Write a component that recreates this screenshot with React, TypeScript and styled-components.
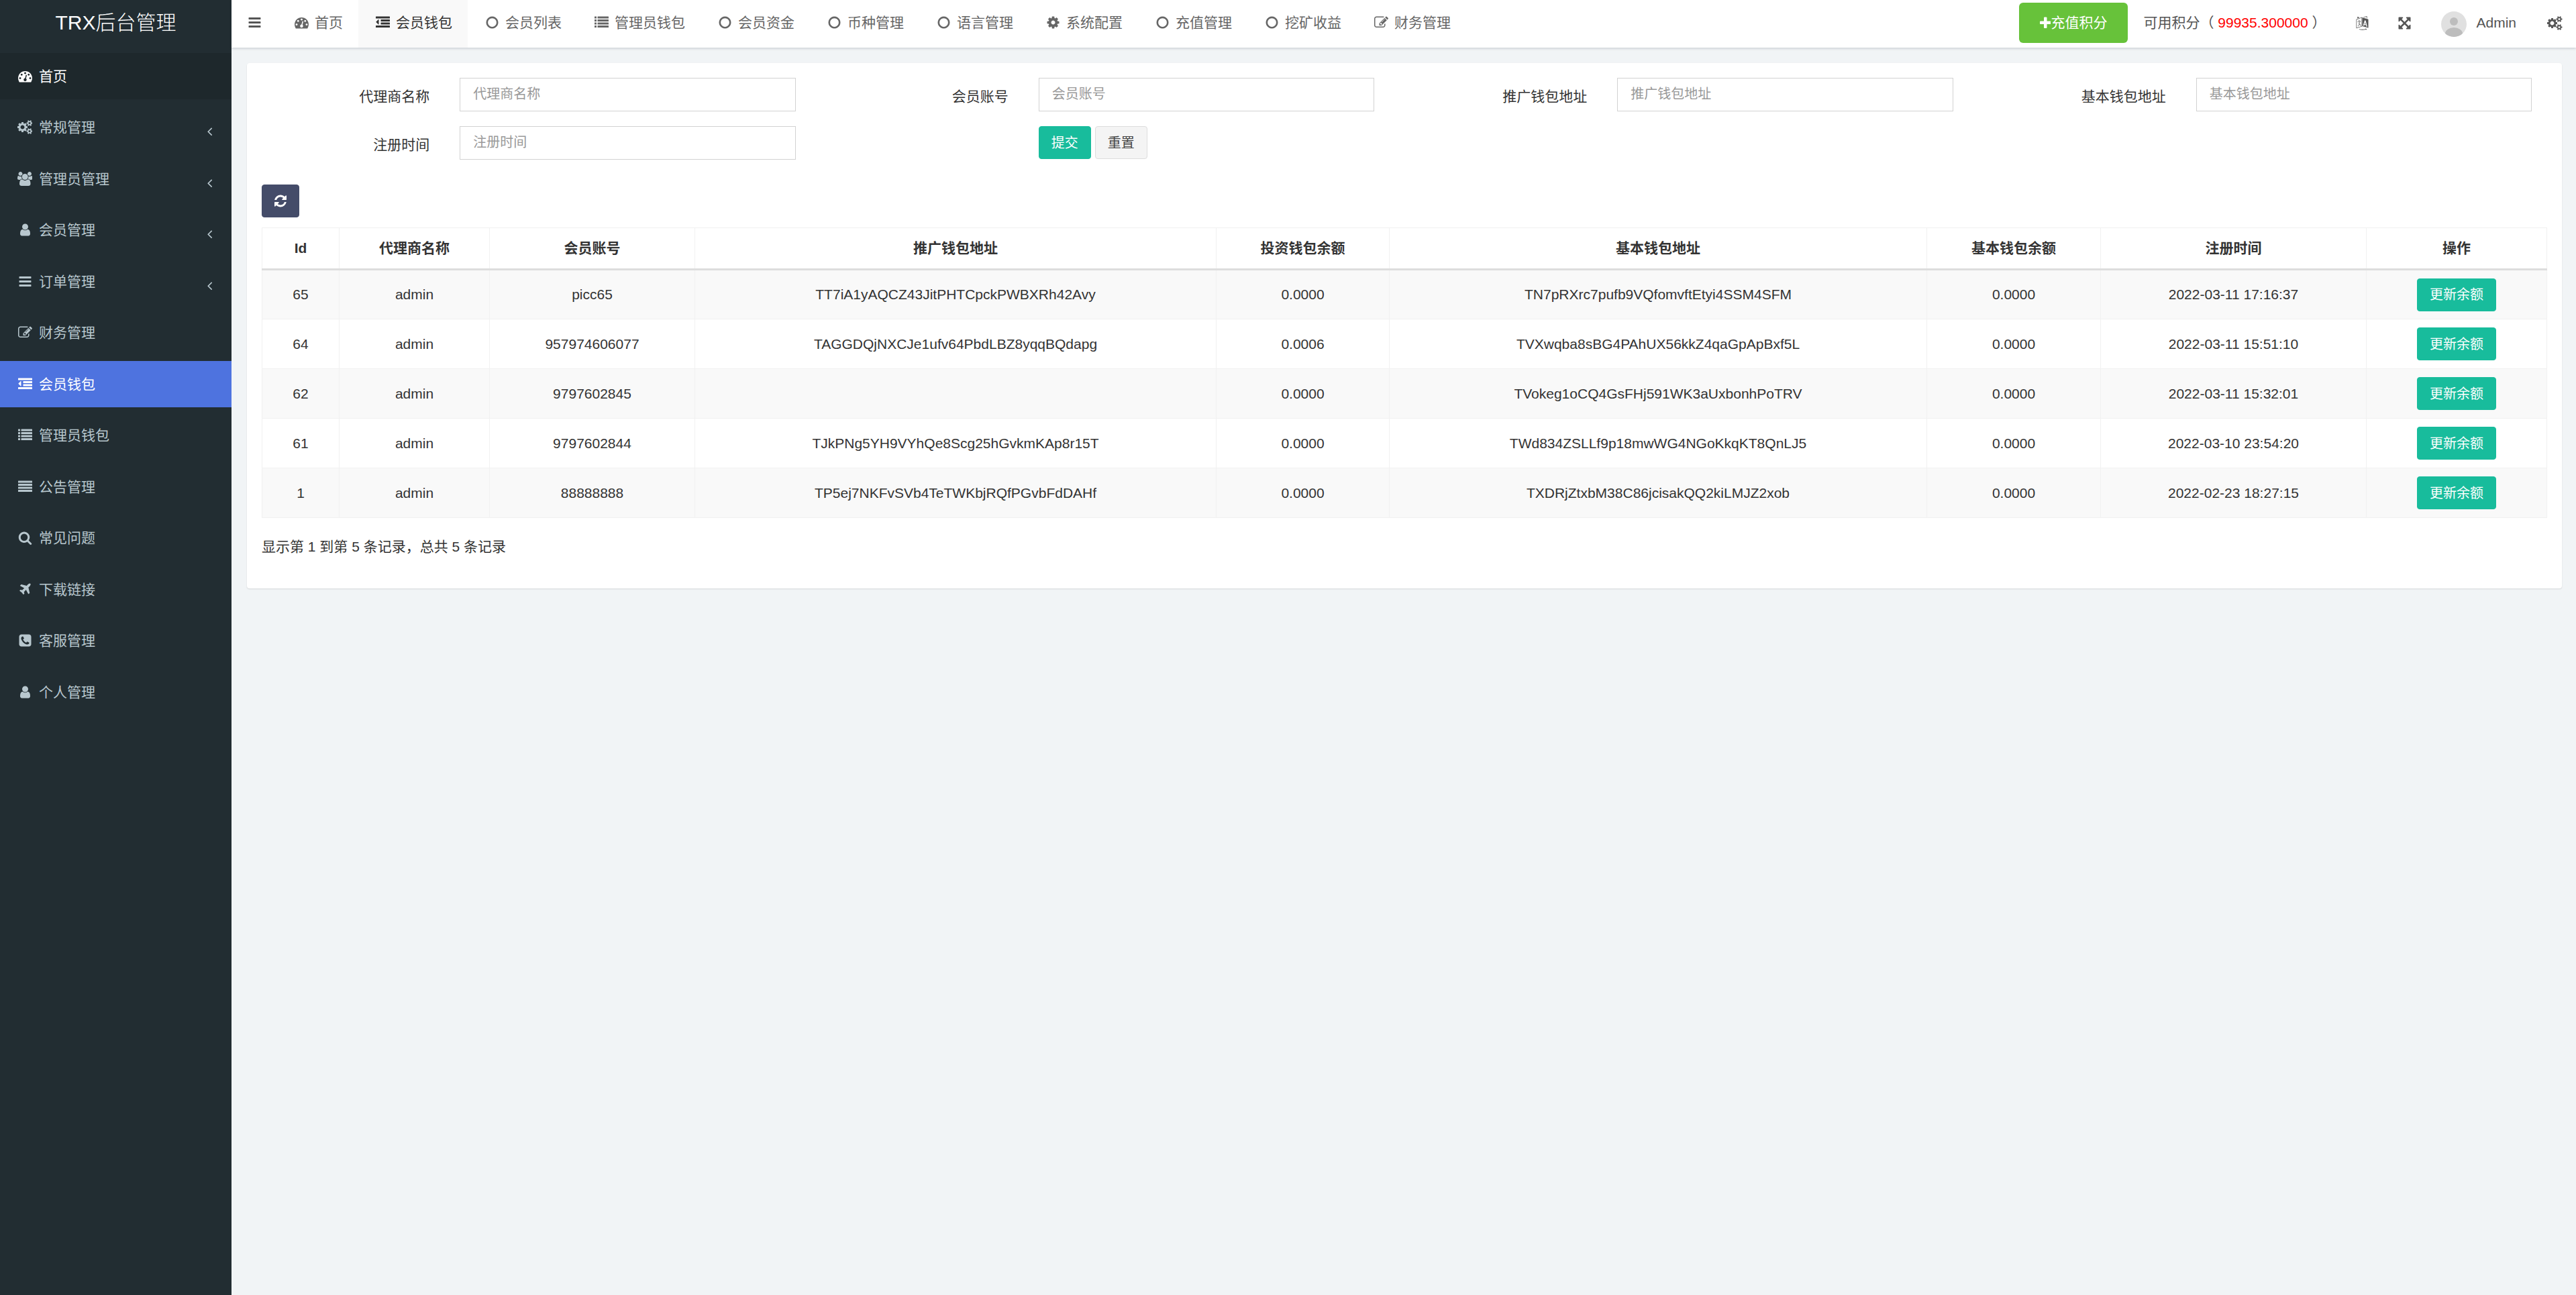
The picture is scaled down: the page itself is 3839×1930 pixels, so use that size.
import React from "react";
import styled, { createGlobalStyle, css } from "styled-components";

const GlobalStyle = createGlobalStyle`
  *, *::before, *::after { box-sizing: border-box; }
  html, body { margin: 0; padding: 0; background: #f1f4f6; }
  body, button, input {
    font-family: "Liberation Sans", "Noto Sans CJK SC", sans-serif;
    font-size: 21px;
    line-height: 30px;
    color: #333;
  }
`;

/* ---------- icons ---------- */

const bar = (x: number, y: number, w: number) =>
  `M${x + 32} ${y}h${w - 64}q32 0 32 32v192q0 32-32 32h${64 - w}q-32 0-32-32v-192q0-32 32-32z`;

/* Each icon: left edge of its view box, width of its view box, path. */
const ICONS = {
  bars: [0, 1792, "M1664 1344v128q0 26-19 45t-45 19h-1408q-26 0-45-19t-19-45v-128q0-26 19-45t45-19h1408q26 0 45 19t19 45zm0-512v128q0 26-19 45t-45 19h-1408q-26 0-45-19t-19-45v-128q0-26 19-45t45-19h1408q26 0 45 19t19 45zm0-512v128q0 26-19 45t-45 19h-1408q-26 0-45-19t-19-45v-128q0-26 19-45t45-19h1408q26 0 45 19t19 45z"],
  dashboard: [0, 1792, "M384 1152q0-53-37.5-90.5t-90.5-37.5-90.5 37.5-37.5 90.5 37.5 90.5 90.5 37.5 90.5-37.5 37.5-90.5zm192-448q0-53-37.5-90.5t-90.5-37.5-90.5 37.5-37.5 90.5 37.5 90.5 90.5 37.5 90.5-37.5 37.5-90.5zm428 481l101-382q6-26-7.5-48.5t-38.5-29.5-48 6.5-30 39.5l-101 382q-60 5-107 43.5t-63 98.5q-20 77 20 146t117 89 146-20 89-117q16-60-6-117t-72-91zm660-33q0-53-37.5-90.5t-90.5-37.5-90.5 37.5-37.5 90.5 37.5 90.5 90.5 37.5 90.5-37.5 37.5-90.5zm-640-640q0-53-37.5-90.5t-90.5-37.5-90.5 37.5-37.5 90.5 37.5 90.5 90.5 37.5 90.5-37.5 37.5-90.5zm448 192q0-53-37.5-90.5t-90.5-37.5-90.5 37.5-37.5 90.5 37.5 90.5 90.5 37.5 90.5-37.5 37.5-90.5zm320 448q0 261-141 483-19 29-54 29h-1402q-35 0-54-29-141-221-141-483 0-182 71-348t191-286 286-191 348-71 348 71 286 191 191 286 71 348z"],
  cogs: [0, 1920, "M896 896q0-106-75-181t-181-75-181 75-75 181 75 181 181 75 181-75 75-181zm768 512q0-52-38-90t-90-38-90 38-38 90q0 53 37.5 90.5t90.5 37.5 90.5-37.5 37.5-90.5zm0-1024q0-52-38-90t-90-38-90 38-38 90q0 53 37.5 90.5t90.5 37.5 90.5-37.5 37.5-90.5zm-384 421v185q0 10-7 19.5t-16 10.5l-155 24q-11 35-32 76 34 48 90 115 7 11 7 20 0 12-7 19-23 30-82.5 89.5t-78.5 59.5q-11 0-21-7l-115-90q-37 19-77 31-11 108-23 155-7 24-30 24h-186q-11 0-20-7.5t-10-17.5l-23-153q-34-10-75-31l-118 89q-7 7-20 7-11 0-21-8-144-133-144-160 0-9 7-19 10-14 41-53t47-61q-23-44-35-82l-152-24q-10-1-17-9.5t-7-19.5v-185q0-10 7-19.5t16-10.5l155-24q11-35 32-76-34-48-90-115-7-11-7-20 0-12 7-20 22-30 82-89t79-59q11 0 21 7l115 90q34-18 77-32 11-108 23-154 7-24 30-24h186q11 0 20 7.5t10 17.5l23 153q34 10 75 31l118-89q8-7 20-7 11 0 21 8 144 133 144 160 0 8-7 19-12 16-42 54t-45 60q23 48 34 82l152 23q10 2 17 10.5t7 19.5zm640 533v140q0 16-149 31-12 27-30 52 51 113 51 138 0 4-4 7-122 71-124 71-8 0-46-47t-52-68q-20 2-30 2t-30-2q-14 21-52 68t-46 47q-2 0-124-71-4-3-4-7 0-25 51-138-18-25-30-52-149-15-149-31v-140q0-16 149-31 13-29 30-52-51-113-51-138 0-4 4-7 4-2 35-20t59-34 30-16q8 0 46 46.5t52 67.5q20-2 30-2t30 2q51-71 92-112l6-2q4 0 124 70 4 3 4 7 0 25-51 138 17 23 30 52 149 15 149 31zm0-1024v140q0 16-149 31-12 27-30 52 51 113 51 138 0 4-4 7-122 71-124 71-8 0-46-47t-52-68q-20 2-30 2t-30-2q-14 21-52 68t-46 47q-2 0-124-71-4-3-4-7 0-25 51-138-18-25-30-52-149-15-149-31v-140q0-16 149-31 13-29 30-52-51-113-51-138 0-4 4-7 4-2 35-20t59-34 30-16q8 0 46 46.5t52 67.5q20-2 30-2t30 2q51-71 92-112l6-2q4 0 124 70 4 3 4 7 0 25-51 138 17 23 30 52 149 15 149 31z"],
  group: [0, 1920, "M593 896q-162 5-265 128h-134q-82 0-138-40.5t-56-118.5q0-353 124-353 6 0 43.5 21t97.5 42.5 119 21.5q67 0 133-23-5 37-5 66 0 139 81 256zm1071 637q0 120-73 189.5t-194 69.5h-874q-121 0-194-69.5t-73-189.5q0-53 3.5-103.5t14-109 26.5-108.5 43-97.5 62-81 85.5-53.5 111.5-20q10 0 43 21.5t73 48 107 48 135 21.5 135-21.5 107-48 73-48 43-21.5q61 0 111.5 20t85.5 53.5 62 81 43 97.5 26.5 108.5 14 109 3.5 103.5zm-1024-1277q0 106-75 181t-181 75-181-75-75-181 75-181 181-75 181 75 75 181zm704 384q0 159-112.5 271.5t-271.5 112.5-271.5-112.5-112.5-271.5 112.5-271.5 271.5-112.5 271.5 112.5 112.5 271.5zm576 225q0 78-56 118.5t-138 40.5h-134q-103-123-265-128 81-117 81-256 0-29-5-66 66 23 133 23 59 0 119-21.5t97.5-42.5 43.5-21q124 0 124 353zm-128-609q0 106-75 181t-181 75-181-75-75-181 75-181 181-75 181 75 75 181z"],
  user: [0, 1792, "M1536 1399q0 109-62.5 187t-150.5 78h-854q-88 0-150.5-78t-62.5-187q0-85 8.5-160.5t31.5-152 58.5-131 94-89 134.5-34.5q131 128 313 128t313-128q76 0 134.5 34.5t94 89 58.5 131 31.5 152 8.5 160.5zm-256-887q0 159-112.5 271.5t-271.5 112.5-271.5-112.5-112.5-271.5 112.5-271.5 271.5-112.5 271.5 112.5 112.5 271.5z"],
  edit: [0, 1792, "M888 1184l116-116-152-152-116 116v56h96v96h56zm440-720q-16-16-33 1l-350 350q-17 17-1 33t33-1l350-350q17-17 1-33zm80 594v190q0 119-84.5 203.5t-203.5 84.5h-832q-119 0-203.5-84.5t-84.5-203.5v-832q0-119 84.5-203.5t203.5-84.5h832q63 0 117 25 15 7 18 23 3 17-9 29l-49 49q-14 14-32 8-23-6-45-6h-832q-66 0-113 47t-47 113v832q0 66 47 113t113 47h832q66 0 113-47t47-113v-126q0-13 9-22l64-64q15-15 35-7t20 29zm-96-738l288 288-672 672h-288v-288zm444 132l-92 92-288-288 92-92q28-28 68-28t68 28l152 152q28 28 28 68t-28 68z"],
  dedent: [0, 1792, "M384 544v576q0 13-9.5 22.5t-22.5 9.5q-14 0-23-9l-288-288q-9-9-9-23t9-23l288-288q9-9 23-9 13 0 22.5 9.5t9.5 22.5z" + bar(0, 1280, 1792) + bar(640, 896, 1152) + bar(640, 512, 1152) + bar(0, 128, 1792)],
  list: [0, 1792, [128, 512, 896, 1280].map((y) => bar(0, y, 256) + bar(384, y, 1408)).join("")],
  justify: [0, 1792, [128, 512, 896, 1280].map((y) => bar(0, y, 1792)).join("")],
  search: [0, 1792, "M1216 832q0-185-131.5-316.5t-316.5-131.5-316.5 131.5-131.5 316.5 131.5 316.5 316.5 131.5 316.5-131.5 131.5-316.5zm512 832q0 52-38 90t-90 38q-54 0-90-38l-343-342q-179 124-399 124-143 0-273.5-55.5t-225-150-150-225-55.5-273.5 55.5-273.5 150-225 225-150 273.5-55.5 273.5 55.5 225 150 150 225 55.5 273.5q0 220-124 399l343 343q37 37 37 90z"],
  plane: [0, 1792, "M1568 160q44 52 12 148t-108 172l-161 161 160 696q5 19-12 33l-128 96q-7 6-19 6-4 0-7-1-15-3-21-16l-279-508-259 259 53 194q5 17-8 31l-96 96q-9 9-23 9h-2q-15-2-24-13l-189-252-252-189q-11-7-13-23-1-13 9-25l96-97q9-9 23-9 6 0 8 1l194 53 259-259-508-279q-14-8-17-24-2-16 9-27l128-128q14-13 30-8l665 159 160-160q76-76 172-108t148 12z"],
  phone: [0, 1792, "M1408 1193q0-11-2-16t-18-16.5-40.5-25-47.5-26.5-45.5-25-28.5-15q-5-3-19-13t-25-15-21-5q-15 0-36.5 20.5t-39.5 45-38.5 45-33.5 20.5q-7 0-16.5-3.5t-15.5-6.5-17-9.5-14-8.5q-99-55-170-126.5t-127-170.5q-2-3-8.5-14t-9.5-17-6.5-15.5-3.5-16.5q0-13 20.5-33.5t45-38.5 45-39.5 20.5-36.5q0-10-5-21t-15-25-13-19q-3-6-15-28.5t-25-45.5-26.5-47.5-25-40.5-16.5-18-16-2q-48 0-101 22-46 21-80 94.5t-34 130.5q0 16 2.5 34t5 30.5 9 33 10 29.5 12.5 33 11 30q60 164 216.5 320.5t320.5 216.5q6 2 30 11t33 12.5 29.5 10 33 9 30.5 5 34 2.5q57 0 130.5-34t94.5-80q22-53 22-101zm256-777v960q0 119-84.5 203.5t-203.5 84.5h-960q-119 0-203.5-84.5t-84.5-203.5v-960q0-119 84.5-203.5t203.5-84.5h960q119 0 203.5 84.5t84.5 203.5z"],
  circle: [0, 1792, "M896 352q-148 0-273 73t-198 198-73 273 73 273 198 198 273 73 273-73 198-198 73-273-73-273-198-198-273-73zm768 544q0 209-103 385.5t-279.5 279.5-385.5 103-385.5-103-279.5-279.5-103-385.5 103-385.5 279.5-279.5 385.5-103 385.5 103 279.5 279.5 103 385.5z"],
  cog: [0, 1792, "M1152 896q0-106-75-181t-181-75-181 75-75 181 75 181 181 75 181-75 75-181zm512-109v222q0 12-8 23t-20 13l-185 28q-19 54-39 91 35 50 107 138 10 12 10 25t-9 23q-27 37-99 108t-94 71q-12 0-26-9l-138-108q-44 23-91 38-16 136-29 186-7 28-36 28h-222q-14 0-24.5-8.5t-11.5-21.5l-28-184q-49-16-90-37l-141 107q-10 9-25 9-14 0-25-11-126-114-165-168-7-10-7-23 0-12 8-23 15-21 51-66.5t54-70.5q-27-50-41-99l-183-27q-13-2-21-12.5t-8-23.5v-222q0-12 8-23t19-13l186-28q14-46 39-92-40-57-107-138-10-12-10-24 0-10 9-23 26-36 98.5-107.5t94.5-71.5q13 0 26 10l138 107q44-23 91-38 16-136 29-186 7-28 36-28h222q14 0 24.5 8.5t11.5 21.5l28 184q49 16 90 37l142-107q9-9 24-9 13 0 25 10 129 119 165 170 7 8 7 22 0 12-8 23-15 21-51 66.5t-54 70.5q26 50 41 98l183 28q13 2 21 12.5t8 23.5z"],
  plus: [192, 1408, "M1600 736v192q0 40-28 68t-68 28h-416v416q0 40-28 68t-68 28h-192q-40 0-68-28t-28-68v-416h-416q-40 0-68-28t-28-68v-192q0-40 28-68t68-28h416v-416q0-40 28-68t68-28h192q40 0 68 28t28 68v416h416q40 0 68 28t28 68z"],
  refresh: [128, 1536, "M1639 1056q0 5-1 7-64 268-268 434.5t-478 166.5q-146 0-282.5-55t-243.5-157l-129 129q-19 19-45 19t-45-19-19-45v-448q0-26 19-45t45-19h448q26 0 45 19t19 45-19 45l-137 137q71 66 161 102t187 36q134 0 250-65t186-179q11-17 53-117 8-23 30-23h192q13 0 22.5 9.5t9.5 22.5zm25-800v448q0 26-19 45t-45 19h-448q-26 0-45-19t-19-45 19-45l138-138q-148-137-349-137-134 0-250 65t-186 179q-11 17-53 117-8 23-30 23h-199q-13 0-22.5-9.5t-9.5-22.5v-7q65-268 270-434.5t480-166.5q146 0 284 55.5t245 156.5l130-129q19-19 45-19t45 19 19 45z"],
  expand: [0, 1792, "M1411 541l-355 355 355 355 144-144q29-31 70-14 39 17 39 59v448q0 26-19 45t-45 19h-448q-42 0-59-40-17-39 14-69l144-144-355-355-355 355 144 144q31 30 14 69-17 40-59 40h-448q-26 0-45-19t-19-45v-448q0-42 40-59 39-17 69 14l144 144 355-355-355-355-144 144q-19 19-45 19-12 0-24-5-40-17-40-59v-448q0-26 19-45t45-19h448q42 0 59 40 17 39-14 69l-144 144 355 355 355-355-144-144q-31-30-14-69 17-40 59-40h448q26 0 45 19t19 45v448q0 42-39 59-13 5-25 5-26 0-45-19z"],
  angle: [0, 1792, "M1203 544q0 13-10 23l-393 393 393 393q10 10 10 23t-10 23l-50 50q-10 10-23 10t-23-10l-466-466q-10-10-10-23t10-23l466-466q10-10 23-10t23 10l50 50q10 10 10 23z"],
  language: [0, 1792, "M128 400l742-270v1200l-742 230zm62 50v1030l620-190v-1070zM900 160l764 240v1100l-764-220zM1200 540l130 40 210 780-130-40-40-160-200-60-40 140-130-40zM1265 760l-70 260 130 40zM300 700l400-110v70l-400 110zM450 500h80v120l-80 20zM320 1240q210-150 260-550l70-20q-60 420-280 640zM420 860l60-20q80 230 250 310l-40 70q-190-100-270-360zM250 300l50-240 260 130zM1000 130l500-130v300l-60-20v-200l-260 60zM500 1640q400 110 800 0l20-70 140 70-70 130-40-60q-450 130-850 0z"],
} as const;

type IconName = keyof typeof ICONS;

const Svg = styled.svg`
  height: 21px;
  flex: none;
  fill: currentColor;
`;

const Icon = ({ name }: { name: IconName }) => {
  const [left, width, path] = ICONS[name];
  return (
    <Svg viewBox={`${left} 0 ${width} 1792`} aria-hidden="true">
      <path d={path} fillRule={name === "language" ? "evenodd" : "nonzero"} />
    </Svg>
  );
};

/* ---------- shell ---------- */

const Shell = styled.div`
  display: flex;
  min-height: 100vh;
`;

const Sidebar = styled.aside`
  flex: 0 0 345px;
  background: #222d32;
`;

const Brand = styled.a`
  display: flex;
  justify-content: center;
  align-items: center;
  height: 79px;
  padding: 0 0 12px;
  font-size: 30px;
  font-weight: 300;
  color: #fff;
  text-decoration: none;
`;

const Menu = styled.ul`
  margin: 0;
  padding: 0;
  list-style: none;
`;

const MenuItem = styled.li`
  margin-bottom: 7px;
  &:nth-child(even) {
    margin-bottom: 8px;
  }
`;

const MenuLink = styled.a<{ $tone?: "home" | "active" }>`
  display: flex;
  align-items: center;
  height: 69px;
  padding: 0 22px;
  color: #b8c7ce;
  text-decoration: none;
  ${(p) => p.$tone === "home" && css`background: #1e282c; color: #fff;`}
  ${(p) => p.$tone === "active" && css`background: #4e73df; color: #fff;`}
`;

const MenuIcon = styled.span`
  display: flex;
  justify-content: center;
  align-items: center;
  width: 30px;
  margin-right: 6px;
`;

const Arrow = styled.span`
  display: flex;
  margin-left: auto;
  padding-top: 12px;
`;

const Main = styled.div`
  flex: 1;
  min-width: 0;
`;

const Header = styled.header`
  display: flex;
  align-items: stretch;
  height: 71px;
  background: #fff;
  box-shadow: 0 1px 4px rgba(0, 21, 41, 0.2);
  color: #555;
`;

const plainButton = css`
  display: flex;
  align-items: center;
  justify-content: center;
  border: 0;
  background: none;
  color: inherit;
  cursor: pointer;
`;

const Toggle = styled.button`
  ${plainButton}
  width: 68px;
  padding: 0 0 4px;
`;

const Tabs = styled.nav`
  display: flex;
`;

const Tab = styled.a<{ $active?: boolean }>`
  display: flex;
  align-items: center;
  padding: 0 23px 4px;
  color: ${(p) => (p.$active ? "#333" : "#666")};
  background: ${(p) => (p.$active ? "#f9f9f9" : "transparent")};
  text-decoration: none;
  white-space: nowrap;
`;

const TabIcon = styled.span`
  display: flex;
  justify-content: center;
  width: 27px;
  margin-right: 6px;
`;

const HeaderRight = styled.div`
  display: flex;
  align-items: center;
  margin-left: auto;
  padding-bottom: 3px;
  white-space: nowrap;
`;

const Recharge = styled.button`
  display: flex;
  align-items: center;
  height: 60px;
  padding: 0 31px;
  border: 0;
  border-radius: 6px;
  background: #67c23a;
  color: #fff;
`;

const Points = styled.span`
  margin: 0 23px;
`;

const Amount = styled.span`
  color: #f00;
`;

const HeaderIcon = styled.button`
  ${plainButton}
  width: 63px;
  padding: 0;
`;

const UserLink = styled.a`
  display: flex;
  align-items: center;
  margin: 0 26px 0 23px;
  gap: 14px;
  color: inherit;
  text-decoration: none;
`;

const Avatar = styled.svg`
  width: 38px;
  height: 38px;
  margin-top: 4px;
`;

/* ---------- content ---------- */

const Content = styled.main`
  padding: 23px 21px 23px 23px;
`;

const Panel = styled.section`
  padding: 22px 0 47px;
  border-radius: 4px;
  background: #fff;
  box-shadow: 0 1px 2px rgba(0, 0, 0, 0.12);
`;

const SearchForm = styled.form`
  display: grid;
  grid-template-columns: repeat(4, 1fr);
  row-gap: 22px;
`;

const Field = styled.div`
  display: grid;
  grid-template-columns: 272fr 500fr;
  column-gap: 45px;
  padding-right: 45px;
`;

const FieldLabel = styled.label`
  padding-top: 13px;
  text-align: right;
`;

const TextInput = styled.input`
  width: 100%;
  height: 50px;
  padding: 0 19px 2px;
  border: 1px solid #d2d2d2;
  border-radius: 0;
  background: #fff;
  font-size: 20px;
  &::placeholder {
    color: #999;
    opacity: 1;
  }
`;

const Actions = styled.div`
  grid-column: 2;
  display: flex;
  gap: 6px;
`;

const Button = styled.button<{ $kind: "primary" | "plain" | "dark" }>`
  display: inline-flex;
  align-items: center;
  justify-content: center;
  height: 49px;
  padding: 0 18px;
  border: 1px solid ${(p) => ({ primary: "#18bc9c", plain: "#ddd", dark: "#444c69" })[p.$kind]};
  border-radius: 4px;
  background: ${(p) => ({ primary: "#18bc9c", plain: "#f4f4f4", dark: "#444c69" })[p.$kind]};
  color: ${(p) => (p.$kind === "plain" ? "#444" : "#fff")};
  font-size: 20px;
  vertical-align: top;
`;

const Toolbar = styled.div`
  padding: 37px 22px 15px;
`;

const TableWrap = styled.div`
  padding: 0 22px;
`;

const Table = styled.table`
  width: 100%;
  table-layout: fixed;
  border-collapse: collapse;
  text-align: center;
`;

const Th = styled.th`
  height: 62px;
  padding: 0;
  border: 1px solid #f1f1f1;
  border-bottom: 3px solid #ddd;
  font-weight: 700;
`;

const Tr = styled.tr`
  &:nth-child(odd) {
    background: #f9f9f9;
  }
`;

const Td = styled.td`
  height: 74px;
  padding: 0;
  border: 1px solid #f1f1f1;
`;

const Summary = styled.p`
  margin: 0;
  padding: 28px 22px 0;
`;

const MENU: { icon: IconName; text: string; tone?: "home" | "active"; tree?: boolean }[] = [
  { icon: "dashboard", text: "首页", tone: "home" },
  { icon: "cogs", text: "常规管理", tree: true },
  { icon: "group", text: "管理员管理", tree: true },
  { icon: "user", text: "会员管理", tree: true },
  { icon: "bars", text: "订单管理", tree: true },
  { icon: "edit", text: "财务管理" },
  { icon: "dedent", text: "会员钱包", tone: "active" },
  { icon: "list", text: "管理员钱包" },
  { icon: "justify", text: "公告管理" },
  { icon: "search", text: "常见问题" },
  { icon: "plane", text: "下载链接" },
  { icon: "phone", text: "客服管理" },
  { icon: "user", text: "个人管理" },
];

const TABS: { icon: IconName; text: string; active?: boolean }[] = [
  { icon: "dashboard", text: "首页" },
  { icon: "dedent", text: "会员钱包", active: true },
  { icon: "circle", text: "会员列表" },
  { icon: "list", text: "管理员钱包" },
  { icon: "circle", text: "会员资金" },
  { icon: "circle", text: "币种管理" },
  { icon: "circle", text: "语言管理" },
  { icon: "cog", text: "系统配置" },
  { icon: "circle", text: "充值管理" },
  { icon: "circle", text: "挖矿收益" },
  { icon: "edit", text: "财务管理" },
];

const FIELDS = ["代理商名称", "会员账号", "推广钱包地址", "基本钱包地址", "注册时间"];

const COLUMNS: [string, number][] = [
  ["Id", 115],
  ["代理商名称", 224],
  ["会员账号", 306],
  ["推广钱包地址", 777],
  ["投资钱包余额", 258],
  ["基本钱包地址", 801],
  ["基本钱包余额", 259],
  ["注册时间", 396],
  ["操作", 269],
];

const ROWS = [
  ["65", "admin", "picc65", "TT7iA1yAQCZ43JitPHTCpckPWBXRh42Avy", "0.0000", "TN7pRXrc7pufb9VQfomvftEtyi4SSM4SFM", "0.0000", "2022-03-11 17:16:37"],
  ["64", "admin", "957974606077", "TAGGDQjNXCJe1ufv64PbdLBZ8yqqBQdapg", "0.0006", "TVXwqba8sBG4PAhUX56kkZ4qaGpApBxf5L", "0.0000", "2022-03-11 15:51:10"],
  ["62", "admin", "9797602845", "", "0.0000", "TVokeg1oCQ4GsFHj591WK3aUxbonhPoTRV", "0.0000", "2022-03-11 15:32:01"],
  ["61", "admin", "9797602844", "TJkPNg5YH9VYhQe8Scg25hGvkmKAp8r15T", "0.0000", "TWd834ZSLLf9p18mwWG4NGoKkqKT8QnLJ5", "0.0000", "2022-03-10 23:54:20"],
  ["1", "admin", "88888888", "TP5ej7NKFvSVb4TeTWKbjRQfPGvbFdDAHf", "0.0000", "TXDRjZtxbM38C86jcisakQQ2kiLMJZ2xob", "0.0000", "2022-02-23 18:27:15"],
];

export default function App() {
  return (
    <>
      <GlobalStyle />
      <Shell>
        <Sidebar>
          <Brand href="#">TRX后台管理</Brand>
          <Menu>
            {MENU.map((m) => (
              <MenuItem key={m.text}>
                <MenuLink href="#" $tone={m.tone}>
                  <MenuIcon><Icon name={m.icon} /></MenuIcon>
                  {m.text}
                  {m.tree && <Arrow><Icon name="angle" /></Arrow>}
                </MenuLink>
              </MenuItem>
            ))}
          </Menu>
        </Sidebar>
        <Main>
          <Header>
            <Toggle type="button" aria-label="菜单"><Icon name="bars" /></Toggle>
            <Tabs>
              {TABS.map((t) => (
                <Tab key={t.text} href="#" $active={t.active}>
                  <TabIcon><Icon name={t.icon} /></TabIcon>
                  {t.text}
                </Tab>
              ))}
            </Tabs>
            <HeaderRight>
              <Recharge type="button"><Icon name="plus" />充值积分</Recharge>
              <Points>可用积分（ <Amount>99935.300000</Amount> ）</Points>
              <HeaderIcon type="button" aria-label="语言"><Icon name="language" /></HeaderIcon>
              <HeaderIcon type="button" aria-label="全屏"><Icon name="expand" /></HeaderIcon>
              <UserLink href="#">
                <Avatar viewBox="0 0 38 38" aria-hidden="true">
                  <clipPath id="avatar"><circle cx="19" cy="19" r="19" /></clipPath>
                  <g clipPath="url(#avatar)">
                    <rect width="38" height="38" fill="#e0e0e0" />
                    <circle cx="19" cy="15" r="6" fill="#bdbdbd" />
                    <ellipse cx="19" cy="33" rx="13" ry="9" fill="#bdbdbd" />
                  </g>
                </Avatar>
                Admin
              </UserLink>
              <HeaderIcon type="button" aria-label="设置"><Icon name="cogs" /></HeaderIcon>
            </HeaderRight>
          </Header>
          <Content>
            <Panel>
              <SearchForm>
                {FIELDS.map((f, i) => (
                  <Field key={f}>
                    <FieldLabel htmlFor={`field-${i}`}>{f}</FieldLabel>
                    <TextInput id={`field-${i}`} type="text" placeholder={f} />
                  </Field>
                ))}
                <Field>
                  <Actions>
                    <Button type="submit" $kind="primary">提交</Button>
                    <Button type="reset" $kind="plain">重置</Button>
                  </Actions>
                </Field>
              </SearchForm>
              <Toolbar>
                <Button type="button" $kind="dark" aria-label="刷新"><Icon name="refresh" /></Button>
              </Toolbar>
              <TableWrap>
                <Table>
                  <colgroup>
                    {COLUMNS.map(([name, width]) => <col key={name} style={{ width }} />)}
                  </colgroup>
                  <thead>
                    <tr>{COLUMNS.map(([name]) => <Th key={name} scope="col">{name}</Th>)}</tr>
                  </thead>
                  <tbody>
                    {ROWS.map((r) => (
                      <Tr key={r[0]}>
                        {r.map((c, i) => <Td key={i}>{c}</Td>)}
                        <Td><Button type="button" $kind="primary">更新余额</Button></Td>
                      </Tr>
                    ))}
                  </tbody>
                </Table>
              </TableWrap>
              <Summary>显示第 1 到第 5 条记录，总共 5 条记录</Summary>
            </Panel>
          </Content>
        </Main>
      </Shell>
    </>
  );
}
